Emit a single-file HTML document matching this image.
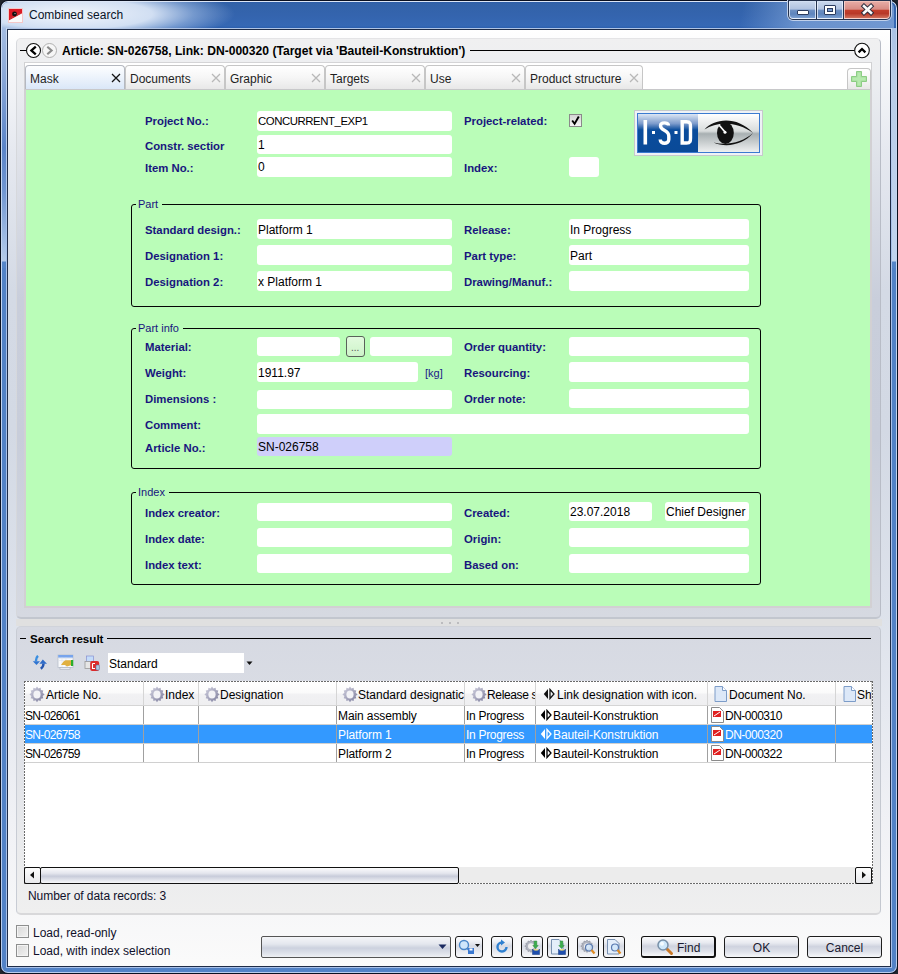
<!DOCTYPE html>
<html><head><meta charset="utf-8">
<style>
*{margin:0;padding:0;box-sizing:border-box}
html,body{width:898px;height:974px;overflow:hidden;background:#20242c}
body{position:relative;font-family:"Liberation Sans",sans-serif;font-size:12px;color:#000}
.a{position:absolute}
.t{position:absolute;white-space:nowrap;line-height:1}
.lbl{position:absolute;white-space:nowrap;line-height:1;font-weight:bold;font-size:11.35px;color:#18157e}
.fld{position:absolute;background:#fff;border-radius:3px}
.val{position:absolute;white-space:nowrap;line-height:1;font-size:12px;color:#000}
.grp{position:absolute;border:1px solid #050505;border-radius:3px}
.lgd{position:absolute;white-space:nowrap;line-height:1;font-size:11px;color:#18157e;background:#bafdb8;padding:0 4px 0 2px}
.tab{position:absolute;top:65px;height:24px;border:1px solid #c6c6c6;border-bottom:none;border-radius:4px 4px 0 0;
 background:linear-gradient(180deg,#ffffff 0%,#f6f6f6 50%,#e8e8e8 100%)}
.tab .tx{position:absolute;left:4px;top:6.5px;white-space:nowrap;line-height:1;font-size:12px;color:#1e1e1e}
.tab .x{position:absolute;top:7px;width:10px;height:10px}
.hdr{position:absolute;top:682px;height:24px;border-right:1px solid #d5d5d5;border-bottom:1px solid #d5d5d5;
 background:linear-gradient(180deg,#ffffff 0%,#fbfbfb 45%,#f1f1f3 55%,#efeff1 100%)}
.cell{position:absolute;white-space:nowrap;line-height:1;font-size:12px;color:#000}
.btn{position:absolute;top:936px;height:22px;border:1px solid #1e1e1e;border-radius:3px;
 background:linear-gradient(180deg,#fbfbfc 0%,#e8eaf0 30%,#cfd3df 48%,#dfe2ea 75%,#f6f7f9 100%)}
.btn .tx{position:absolute;top:5px;width:100%;text-align:center;white-space:nowrap;line-height:1;font-size:12px;color:#1a1a30}
.ib{position:absolute;top:936px;height:22px;width:22px;border:1.5px solid #1a1a1a;border-radius:3px;
 background:linear-gradient(180deg,#fdfdfe 0%,#eceef3 25%,#d6dae4 45%,#e6e8ee 70%,#f8f8fa 100%)}
</style></head><body>
<div class="a" style="left:0;top:0;width:898px;height:974px;border-radius:8px;background:#0a1020"></div>
<div class="a" style="left:1px;top:1px;width:896px;height:972px;border-radius:7px;background:linear-gradient(180deg,#dce6f6 0px,#c8d8f0 30px,#b8ccec 100%)"></div>
<div class="a" style="left:2px;top:2px;width:894px;height:970px;border-radius:6px;background:linear-gradient(180deg,#8eaad6 0px,#8aa8d8 30px,#7aa0d8 80px,#5a88c8 170px,#5282c6 260px,#5282c6 100%)"></div>
<div class="a" style="left:2px;top:28px;width:4px;height:240px;background:linear-gradient(180deg,#a4bce2 0px,#90acd9 40px,#5a84c8 120px,#6e94d0 160px,#a8c2e6 220px,#b4cae8 233px,#5585c8 234px)"></div>
<div class="a" style="left:892px;top:20px;width:4px;height:248px;background:linear-gradient(180deg,#a8c0e4 0px,#b8cce8 60px,#c0d4ee 241px,#5585c8 242px)"></div>
<div class="a" style="left:2px;top:2px;width:894px;height:26px;border-radius:6px 6px 0 0;background:linear-gradient(180deg,#2a5aa8 0,#3262a8 1px,#3464ae 50%,#3668b4 92%,#2a5eae 100%)"></div>
<div class="a" style="left:2px;top:2px;width:328px;height:26px;border-radius:6px 0 0 0;background:radial-gradient(ellipse 165px 30px at 68px 12px,rgba(250,252,255,.96) 0%,rgba(226,236,250,.9) 50%,rgba(170,196,232,.55) 75%,rgba(52,100,174,0) 100%)"></div>
<div class="a" style="left:600px;top:2px;width:294px;height:26px;border-radius:0 6px 0 0;background:linear-gradient(100deg,rgba(128,164,216,0) 0%,rgba(128,164,216,0) 48%,rgba(128,164,216,.7) 68%,rgba(124,160,214,.85) 100%)"></div>
<div class="a" style="left:6px;top:28px;width:886px;height:1px;background:#b0c4e4"></div>
<div class="a" style="left:6px;top:28px;width:1px;height:940px;background:linear-gradient(180deg,#c8d8f0,#a8c0e8 200px,#a8c0e8)"></div>
<div class="a" style="left:891px;top:28px;width:1px;height:940px;background:linear-gradient(180deg,#c8d8f0,#a8c0e8 200px,#a8c0e8)"></div>
<div class="a" style="left:6px;top:967px;width:886px;height:1px;background:#a8c0e8"></div>
<svg class="a" style="left:8px;top:8px" width="15" height="15" viewBox="0 0 15 15">
 <rect x="0" y="0" width="15" height="15" fill="#f4c8c8"/>
 <path d="M1 1 H14 V5.5 L1 12.5 Z" fill="#dc1a24"/>
 <path d="M1 12.5 L14 5.5 V14 H1 Z" fill="#fafafa"/>
 <path d="M2 10.5 L13 5" stroke="#c04040" stroke-width="0.8"/>
 <circle cx="6.5" cy="6" r="2.4" fill="#111"/>
 <circle cx="7" cy="5.6" r="0.7" fill="#bbb"/>
</svg>
<div class="t" style="left:29px;top:9px;font-size:12px;color:#0a1428">Combined search</div>
<div class="a" style="left:787px;top:0;width:105px;height:21px;border-radius:0 0 6px 6px;background:#c0d0ea"></div>
<div class="a" style="left:788px;top:0;width:103px;height:20px;border-radius:0 0 5px 5px;background:#24324e"></div>
<div class="a" style="left:789px;top:1px;width:27px;height:18px;border-radius:0 0 0 4px;border:1px solid rgba(240,246,255,.75);background:linear-gradient(180deg,#c8d6ec 0%,#b0c2e0 45%,#6e90c2 50%,#5e84bc 75%,#7c9fd2 100%)"></div>
<div class="a" style="left:817px;top:1px;width:26px;height:18px;border:1px solid rgba(240,246,255,.75);background:linear-gradient(180deg,#c8d6ec 0%,#b0c2e0 45%,#6e90c2 50%,#5e84bc 75%,#7c9fd2 100%)"></div>
<div class="a" style="left:844px;top:1px;width:46px;height:18px;border-radius:0 0 4px 0;border:1px solid rgba(255,230,225,.7);background:linear-gradient(180deg,#e6aaa4 0%,#d88c84 45%,#c23e2c 52%,#b83828 72%,#d0705c 100%)"></div>
<div class="a" style="left:797px;top:10px;width:12px;height:5px;background:#fff;border:1px solid #2c3c60;border-radius:1px"></div>
<div class="a" style="left:824px;top:5px;width:12px;height:10px;background:#fff;border:1px solid #2c3c60;border-radius:1px"></div>
<div class="a" style="left:827px;top:8px;width:6px;height:4px;background:#7a9cd0;border:1px solid #2c3c60"></div>
<svg class="a" style="left:860px;top:3px" width="15" height="13" viewBox="0 0 15 13"><path d="M4 3.2 L11 9.8 M11 3.2 L4 9.8" stroke="#2a2a3a" stroke-width="4.6" stroke-linecap="square"/><path d="M4 3.2 L11 9.8 M11 3.2 L4 9.8" stroke="#fafafa" stroke-width="2.6" stroke-linecap="square"/></svg>
<div class="a" style="left:7px;top:29px;width:884px;height:938px;border:1px solid #1e2c48"></div>
<div class="a" style="left:8px;top:30px;width:882px;height:936px;background:linear-gradient(180deg,#ffffff 0px,#f6f7f9 40px,#e6e9f0 120px,#d4dae5 260px,#d3d9e4 400px,#dde2eb 580px,#e6e9f0 680px,#f0f1f5 790px,#fafafa 930px,#fbfbfb 100%)"></div>
<div class="a" style="left:16px;top:38px;width:865px;height:581px;border-radius:5px;border:1px solid #d6d8dc;border-right-color:#b8bcc6;border-bottom:2px solid #c2c6ce;border-top-color:#e4e4e6;background:linear-gradient(180deg,#f0f0f1 0px,#eceef1 40px,#dfe2e9 120px,#c9cedb 260px,#c8cdda 400px,#d3d7e0 540px,#d6d9e1 100%)"></div>
<div class="a" style="left:20px;top:50px;width:7px;height:1px;background:#000"></div>
<svg class="a" style="left:25px;top:42px" width="34" height="17" viewBox="0 0 34 17">
 <circle cx="8.5" cy="8.5" r="7" fill="#fff" stroke="#111" stroke-width="1.1"/>
 <path d="M10.8 4.6 L6.4 8.5 L10.8 12.4" fill="none" stroke="#000" stroke-width="2.3"/>
 <circle cx="24.5" cy="8.5" r="7" fill="#f6f6f6" stroke="#b0b0b0" stroke-width="1"/>
 <path d="M22.3 4.8 L26.6 8.5 L22.3 12.2" fill="none" stroke="#8a8a8a" stroke-width="2.1"/>
</svg>
<div class="t" style="left:62px;top:45px;font-size:12.1px;font-weight:bold">Article: SN-026758, Link: DN-000320 (Target via 'Bauteil-Konstruktion')</div>
<div class="a" style="left:470px;top:50px;width:385px;height:1px;background:#000"></div>
<svg class="a" style="left:853px;top:42px" width="18" height="17" viewBox="0 0 18 17">
 <circle cx="9" cy="8.5" r="7.3" fill="#fff" stroke="#111" stroke-width="1.1"/>
 <path d="M5.6 10.4 L9 7 L12.4 10.4" fill="none" stroke="#000" stroke-width="2.2"/>
</svg>
<div class="a" style="left:24px;top:62px;width:848px;height:28px;background:#fff;border-top:1px solid #d4d4d6;border-left:1px solid #d0d0d2;border-right:1px solid #d0d0d2"></div>
<div class="tab" style="left:25px;width:100px;background:linear-gradient(180deg,#fdfeff 0%,#eef4fc 45%,#dae7f8 100%);border-color:#b4b8c0"><div class="tx">Mask</div><svg class="x" style="left:85px" viewBox="0 0 10 10"><path d="M1 1 L9 9 M9 1 L1 9" stroke="#141414" stroke-width="1.25"/></svg></div>
<div class="tab" style="left:125px;width:100px"><div class="tx">Documents</div><svg class="x" style="left:85px" viewBox="0 0 10 10"><path d="M1 1 L9 9 M9 1 L1 9" stroke="#b8b8b8" stroke-width="1.25"/></svg></div>
<div class="tab" style="left:225px;width:100px"><div class="tx">Graphic</div><svg class="x" style="left:85px" viewBox="0 0 10 10"><path d="M1 1 L9 9 M9 1 L1 9" stroke="#b8b8b8" stroke-width="1.25"/></svg></div>
<div class="tab" style="left:325px;width:100px"><div class="tx">Targets</div><svg class="x" style="left:85px" viewBox="0 0 10 10"><path d="M1 1 L9 9 M9 1 L1 9" stroke="#b8b8b8" stroke-width="1.25"/></svg></div>
<div class="tab" style="left:425px;width:100px"><div class="tx">Use</div><svg class="x" style="left:85px" viewBox="0 0 10 10"><path d="M1 1 L9 9 M9 1 L1 9" stroke="#b8b8b8" stroke-width="1.25"/></svg></div>
<div class="tab" style="left:525px;width:118px"><div class="tx">Product structure</div><svg class="x" style="left:103px" viewBox="0 0 10 10"><path d="M1 1 L9 9 M9 1 L1 9" stroke="#b8b8b8" stroke-width="1.25"/></svg></div>
<div class="tab" style="left:847px;top:68px;width:24px;height:21px"></div>
<svg class="a" style="left:851px;top:71px" width="16" height="16" viewBox="0 0 16 16">
 <path d="M5.5 0.5 H10.5 V5.5 H15.5 V10.5 H10.5 V15.5 H5.5 V10.5 H0.5 V5.5 H5.5 Z" fill="#a4dc9c" stroke="#8ccc84" stroke-width="1"/>
 <path d="M6.5 1.5 H9.5 V6.5 H14.5 V9.5 H9.5 V14.5 H6.5 V9.5 H1.5 V6.5 H6.5 Z" fill="#b6eaae"/>
</svg>
<div class="a" style="left:24px;top:89px;width:848px;height:519px;background:#bafdb8;border:2px solid #d2d0d3;border-top:1px solid #c8c8ca"></div>
<div class="lbl" style="left:145px;top:115.99px">Project No.:</div>
<div class="fld" style="left:257px;top:111px;width:195px;height:20px"></div>
<div class="val" style="left:258px;top:115.84px;font-size:11.4px;letter-spacing:-0.45px">CONCURRENT_EXP1</div>
<div class="lbl" style="left:145px;top:140.99px">Constr. sectior</div>
<div class="fld" style="left:257px;top:135px;width:195px;height:19px"></div>
<div class="val" style="left:258px;top:138.84px">1</div>
<div class="lbl" style="left:145px;top:162.99px">Item No.:</div>
<div class="fld" style="left:257px;top:157px;width:195px;height:20px"></div>
<div class="val" style="left:258px;top:160.84px">0</div>
<div class="lbl" style="left:464px;top:115.99px">Project-related:</div>
<div class="a" style="left:569px;top:114px;width:13px;height:13px;border:1px solid #8a8a8a;background:linear-gradient(180deg,#d4d4d4,#f4f4f4)"></div>
<svg class="a" style="left:570px;top:115px" width="11" height="11" viewBox="0 0 11 11"><path d="M2.2 5.5 L4.6 8.8 L8.8 1.5" fill="none" stroke="#000" stroke-width="1.9"/></svg>
<div class="lbl" style="left:464px;top:162.99px">Index:</div>
<div class="fld" style="left:569px;top:157px;width:30px;height:20px"></div>
<div class="grp" style="left:131px;top:204px;width:630px;height:103px"></div>
<div class="lgd" style="left:136px;top:198.7px">Part</div>
<div class="lbl" style="left:145px;top:224.99px">Standard design.:</div>
<div class="fld" style="left:257px;top:219px;width:195px;height:20px"></div>
<div class="val" style="left:258px;top:223.84px">Platform 1</div>
<div class="lbl" style="left:145px;top:250.99px">Designation 1:</div>
<div class="fld" style="left:257px;top:245px;width:195px;height:20px"></div>
<div class="lbl" style="left:145px;top:276.99px">Designation 2:</div>
<div class="fld" style="left:257px;top:271px;width:195px;height:20px"></div>
<div class="val" style="left:258px;top:275.84px">x Platform 1</div>
<div class="lbl" style="left:464px;top:224.99px">Release:</div>
<div class="fld" style="left:569px;top:219px;width:180px;height:20px"></div>
<div class="val" style="left:570px;top:223.84px">In Progress</div>
<div class="lbl" style="left:464px;top:250.99px">Part type:</div>
<div class="fld" style="left:569px;top:245px;width:180px;height:20px"></div>
<div class="val" style="left:570px;top:249.84px">Part</div>
<div class="lbl" style="left:464px;top:276.99px">Drawing/Manuf.:</div>
<div class="fld" style="left:569px;top:271px;width:180px;height:20px"></div>
<div class="grp" style="left:131px;top:328px;width:630px;height:141px"></div>
<div class="lgd" style="left:136px;top:322.7px">Part info</div>
<div class="lbl" style="left:145px;top:341.99px">Material:</div>
<div class="fld" style="left:257px;top:337px;width:83px;height:19px"></div>
<div class="fld" style="left:370px;top:337px;width:82px;height:19px"></div>
<div class="a" style="left:346px;top:336px;width:19px;height:21px;border:1px solid #5a625a;border-radius:3px;background:linear-gradient(180deg,#e2fade,#cdf4c9)"></div>
<div class="t" style="left:351px;top:343px;font-size:10px;color:#555">...</div>
<div class="lbl" style="left:145px;top:367.99px">Weight:</div>
<div class="fld" style="left:257px;top:362px;width:161px;height:20px"></div>
<div class="val" style="left:258px;top:366.84px">1911.97</div>
<div class="t" style="left:425px;top:368px;font-size:11px;color:#1c1a88">[kg]</div>
<div class="lbl" style="left:145px;top:393.99px">Dimensions :</div>
<div class="fld" style="left:257px;top:390px;width:195px;height:19px"></div>
<div class="lbl" style="left:145px;top:419.99px">Comment:</div>
<div class="fld" style="left:257px;top:414px;width:492px;height:20px"></div>
<div class="lbl" style="left:145px;top:442.99px">Article No.:</div>
<div class="fld" style="left:257px;top:437px;width:195px;height:19px;background:#cfcffa"></div>
<div class="val" style="left:258px;top:440.84px">SN-026758</div>
<div class="lbl" style="left:464px;top:341.99px">Order quantity:</div>
<div class="fld" style="left:569px;top:337px;width:180px;height:19px"></div>
<div class="lbl" style="left:464px;top:367.99px">Resourcing:</div>
<div class="fld" style="left:569px;top:362px;width:180px;height:20px"></div>
<div class="lbl" style="left:464px;top:393.99px">Order note:</div>
<div class="fld" style="left:569px;top:389px;width:180px;height:19px"></div>
<div class="grp" style="left:131px;top:492px;width:630px;height:93px"></div>
<div class="lgd" style="left:136px;top:486.7px">Index</div>
<div class="lbl" style="left:145px;top:507.99px">Index creator:</div>
<div class="fld" style="left:257px;top:503px;width:195px;height:18px"></div>
<div class="lbl" style="left:145px;top:533.99px">Index date:</div>
<div class="fld" style="left:257px;top:528px;width:195px;height:19px"></div>
<div class="lbl" style="left:145px;top:559.99px">Index text:</div>
<div class="fld" style="left:257px;top:554px;width:195px;height:19px"></div>
<div class="lbl" style="left:464px;top:507.99px">Created:</div>
<div class="fld" style="left:569px;top:502px;width:83px;height:19px"></div>
<div class="val" style="left:570px;top:505.84px">23.07.2018</div>
<div class="fld" style="left:665px;top:502px;width:84px;height:19px"></div>
<div class="val" style="left:666px;top:505.84px">Chief Designer</div>
<div class="lbl" style="left:464px;top:533.99px">Origin:</div>
<div class="fld" style="left:569px;top:528px;width:180px;height:19px"></div>
<div class="lbl" style="left:464px;top:559.99px">Based on:</div>
<div class="fld" style="left:569px;top:554px;width:180px;height:19px"></div>
<svg class="a" style="left:634px;top:110px" width="129" height="46" viewBox="0 0 129 46">
 <defs>
  <linearGradient id="lb" x1="0" y1="0" x2="0" y2="1"><stop offset="0" stop-color="#dce6f4"/><stop offset="0.25" stop-color="#7e9ccc"/><stop offset="0.42" stop-color="#0a4c9c"/><stop offset="1" stop-color="#0a4a98"/></linearGradient>
  <linearGradient id="rg" x1="0" y1="0" x2="0" y2="1"><stop offset="0" stop-color="#ffffff"/><stop offset="0.45" stop-color="#d8dcdc"/><stop offset="0.52" stop-color="#a8b0b2"/><stop offset="1" stop-color="#eef0f0"/></linearGradient>
 </defs>
 <rect x="0.5" y="0.5" width="128" height="45" fill="#eef2f6" stroke="#c6cacc"/>
 <rect x="3" y="3" width="123" height="40" fill="#3a7ad0"/>
 <rect x="4" y="4" width="60" height="38" fill="url(#lb)"/>
 <rect x="64" y="4" width="61" height="38" fill="url(#rg)"/>
 <rect x="9.5" y="10" width="3.6" height="24.5" fill="#fff"/>
 <rect x="18" y="21" width="3" height="3" fill="#fff"/>
 <path d="M34.5 15.5 C34.5 12 26.5 12 26.5 15.8 C26.5 21 34.8 19.5 34.8 26 V29.5 C34.8 34.5 26.2 34.5 26.2 29.5" fill="none" stroke="#fff" stroke-width="3.4"/>
 <rect x="40.5" y="21" width="3" height="3" fill="#fff"/>
 <path d="M48.2 11.8 H52.5 C56.5 11.8 56.5 14 56.5 17 V28 C56.5 31 56.5 33 52.5 33 H48.2 Z" fill="none" stroke="#fff" stroke-width="3.4"/>
 <path d="M70.5 19.5 C80 8.5 103 5.5 119 23 C104 11.5 83 11 70.5 19.5 Z" fill="#111"/>
 <path d="M79.5 32.5 C93 38.5 110 34 119 23 C109 32 93 36 79.5 32.5 Z" fill="#111"/>
 <ellipse cx="91.4" cy="23" rx="8.4" ry="11" fill="#111"/>
 <path d="M85.2 15.2 L90.8 21.8" stroke="#fff" stroke-width="1.7"/>
 <circle cx="91" cy="22.2" r="1.5" fill="#fff"/>
</svg>
<div class="a" style="left:16px;top:619px;width:866px;height:7px;background:#e0e0e0"></div>
<div class="a" style="left:441px;top:621.5px;width:2.2px;height:2.2px;border-radius:1px;background:#b0b0b4"></div>
<div class="a" style="left:449px;top:621.5px;width:2.2px;height:2.2px;border-radius:1px;background:#b0b0b4"></div>
<div class="a" style="left:457px;top:621.5px;width:2.2px;height:2.2px;border-radius:1px;background:#b0b0b4"></div>
<div class="a" style="left:16px;top:626px;width:865px;height:289px;border-radius:5px;border:1px solid #d0d3da;border-left-color:#c8ccd4;border-right-color:#c4c8d0;border-bottom:2px solid #d8d8da;background:linear-gradient(180deg,#d6d9e2 0px,#d9dce4 60px,#e2e4e9 150px,#eaebed 220px,#efefef 100%)"></div>
<div class="a" style="left:20px;top:638px;width:6px;height:1px;background:#000"></div>
<div class="t" style="left:30px;top:632.8px;font-size:11.6px;font-weight:bold">Search result</div>
<div class="a" style="left:107px;top:638px;width:764px;height:1px;background:#000"></div>
<svg class="a" style="left:32px;top:655px" width="16" height="16" viewBox="0 0 16 16">
 <path d="M6 0.8 C4.6 2 3.8 3.6 4 6.4" fill="none" stroke="#3a8ee0" stroke-width="2.4"/>
 <path d="M0.8 6.2 H8 L4.5 10 Z" fill="#2f74d0"/>
 <path d="M11.5 8.4 C11.6 10.6 10.6 12.4 8.8 13.8" fill="none" stroke="#2456b0" stroke-width="2.4"/>
 <path d="M7.4 8.8 H15 L10.8 4.6 Z" fill="#2f6cc8"/>
</svg>
<svg class="a" style="left:56px;top:652px" width="20" height="20" viewBox="0 0 20 20">
 <rect x="2" y="3" width="15" height="12.5" fill="#f8f9fb" stroke="#b8c0cc" stroke-width="0.8"/>
 <rect x="2.2" y="3" width="14.8" height="2.6" fill="#78a4ec"/>
 <path d="M3 6.5 H16 M3 8.5 H16 M6 5.6 V15 M10 5.6 V15" stroke="#dde3ec" stroke-width="0.6"/>
 <rect x="4" y="15.5" width="10" height="2" fill="#e8ecf2" stroke="#a8b0bc" stroke-width="0.6"/>
 <path d="M5 13 L7.5 9.5 L9.5 8.2 H15 V13.2 L11 14.6 L9 13 Z" fill="#e0b040"/>
 <rect x="15" y="8" width="2.2" height="6" fill="#2cae2c"/>
</svg>
<svg class="a" style="left:82px;top:652px" width="20" height="20" viewBox="0 0 20 20">
 <rect x="4.5" y="4" width="7" height="5.5" fill="#c4dcfa" stroke="#8890d0" stroke-width="0.7"/>
 <rect x="3" y="9.5" width="8" height="7" fill="#e6e6e6" stroke="#9a9a9a" stroke-width="0.8"/>
 <rect x="8.2" y="9" width="9" height="10" rx="2" fill="#dc2a2a"/>
 <path d="M10.5 11.5 V16.5 H13 M10.5 11.5 H13" fill="none" stroke="#fff" stroke-width="1.1"/>
 <rect x="14" y="13" width="3.4" height="5" rx="0.8" fill="#b4c8e0" stroke="#5a7aa8" stroke-width="0.6"/>
</svg>
<div class="a" style="left:108px;top:653px;width:136px;height:20px;background:#fff"></div>
<div class="t" style="left:109px;top:657.8px;font-size:12px">Standard</div>
<svg class="a" style="left:246px;top:661px" width="8" height="5" viewBox="0 0 8 5"><path d="M0.5 0.5 H6.5 L3.5 4 Z" fill="#111"/></svg>
<div class="a" style="left:24px;top:681px;width:849px;height:203px;background:#fff"></div>
<div class="a" style="left:25px;top:724px;width:847px;height:19px;background:#3399ff"></div>
<div class="a" style="left:143px;top:705px;width:1px;height:58px;background:#a0a0a0"></div>
<div class="a" style="left:198px;top:705px;width:1px;height:58px;background:#a0a0a0"></div>
<div class="a" style="left:336px;top:705px;width:1px;height:58px;background:#a0a0a0"></div>
<div class="a" style="left:464px;top:705px;width:1px;height:58px;background:#a0a0a0"></div>
<div class="a" style="left:535px;top:705px;width:1px;height:58px;background:#a0a0a0"></div>
<div class="a" style="left:707px;top:705px;width:1px;height:58px;background:#a0a0a0"></div>
<div class="a" style="left:835px;top:705px;width:1px;height:58px;background:#a0a0a0"></div>
<div class="a" style="left:25px;top:724px;width:847px;height:1px;background:#d0d0d0"></div>
<div class="a" style="left:25px;top:743px;width:847px;height:1px;background:#d0d0d0"></div>
<div class="a" style="left:25px;top:762px;width:847px;height:1px;background:#d0d0d0"></div>
<div class="hdr" style="left:25px;width:119px;overflow:hidden"><svg class="a" style="left:4px;top:4px" width="16" height="17" viewBox="0 0 16 17"><defs><linearGradient id="gg" x1="0" y1="0" x2="1" y2="1"><stop offset="0" stop-color="#d4d4e2"/><stop offset="1" stop-color="#7a7a9a"/></linearGradient></defs><path d="M8 0.6 L9.4 2.5 L11.6 1.7 L11.9 4.1 L14.3 4.5 L13.6 6.8 L15.6 8.4 L13.6 10 L14.3 12.3 L11.9 12.7 L11.6 15.1 L9.4 14.3 L8 16.2 L6.6 14.3 L4.4 15.1 L4.1 12.7 L1.7 12.3 L2.4 10 L0.4 8.4 L2.4 6.8 L1.7 4.5 L4.1 4.1 L4.4 1.7 L6.6 2.5 Z" fill="url(#gg)"/><ellipse cx="8" cy="8.4" rx="3.6" ry="4" fill="#f2f2f6"/></svg><div class="t" style="left:21px;top:6.8px;font-size:12px;letter-spacing:0">Article No.</div></div>
<div class="hdr" style="left:144px;width:55px;overflow:hidden"><svg class="a" style="left:5px;top:4px" width="16" height="17" viewBox="0 0 16 17"><defs><linearGradient id="gg" x1="0" y1="0" x2="1" y2="1"><stop offset="0" stop-color="#d4d4e2"/><stop offset="1" stop-color="#7a7a9a"/></linearGradient></defs><path d="M8 0.6 L9.4 2.5 L11.6 1.7 L11.9 4.1 L14.3 4.5 L13.6 6.8 L15.6 8.4 L13.6 10 L14.3 12.3 L11.9 12.7 L11.6 15.1 L9.4 14.3 L8 16.2 L6.6 14.3 L4.4 15.1 L4.1 12.7 L1.7 12.3 L2.4 10 L0.4 8.4 L2.4 6.8 L1.7 4.5 L4.1 4.1 L4.4 1.7 L6.6 2.5 Z" fill="url(#gg)"/><ellipse cx="8" cy="8.4" rx="3.6" ry="4" fill="#f2f2f6"/></svg><div class="t" style="left:21px;top:6.8px;font-size:12px;letter-spacing:0">Index</div></div>
<div class="hdr" style="left:199px;width:138px;overflow:hidden"><svg class="a" style="left:5px;top:4px" width="16" height="17" viewBox="0 0 16 17"><defs><linearGradient id="gg" x1="0" y1="0" x2="1" y2="1"><stop offset="0" stop-color="#d4d4e2"/><stop offset="1" stop-color="#7a7a9a"/></linearGradient></defs><path d="M8 0.6 L9.4 2.5 L11.6 1.7 L11.9 4.1 L14.3 4.5 L13.6 6.8 L15.6 8.4 L13.6 10 L14.3 12.3 L11.9 12.7 L11.6 15.1 L9.4 14.3 L8 16.2 L6.6 14.3 L4.4 15.1 L4.1 12.7 L1.7 12.3 L2.4 10 L0.4 8.4 L2.4 6.8 L1.7 4.5 L4.1 4.1 L4.4 1.7 L6.6 2.5 Z" fill="url(#gg)"/><ellipse cx="8" cy="8.4" rx="3.6" ry="4" fill="#f2f2f6"/></svg><div class="t" style="left:21px;top:6.8px;font-size:12px;letter-spacing:0">Designation</div></div>
<div class="hdr" style="left:337px;width:128px;overflow:hidden"><svg class="a" style="left:5px;top:4px" width="16" height="17" viewBox="0 0 16 17"><defs><linearGradient id="gg" x1="0" y1="0" x2="1" y2="1"><stop offset="0" stop-color="#d4d4e2"/><stop offset="1" stop-color="#7a7a9a"/></linearGradient></defs><path d="M8 0.6 L9.4 2.5 L11.6 1.7 L11.9 4.1 L14.3 4.5 L13.6 6.8 L15.6 8.4 L13.6 10 L14.3 12.3 L11.9 12.7 L11.6 15.1 L9.4 14.3 L8 16.2 L6.6 14.3 L4.4 15.1 L4.1 12.7 L1.7 12.3 L2.4 10 L0.4 8.4 L2.4 6.8 L1.7 4.5 L4.1 4.1 L4.4 1.7 L6.6 2.5 Z" fill="url(#gg)"/><ellipse cx="8" cy="8.4" rx="3.6" ry="4" fill="#f2f2f6"/></svg><div class="t" style="left:21px;top:6.8px;font-size:12px;letter-spacing:0">Standard designatic</div></div>
<div class="hdr" style="left:465px;width:71px;overflow:hidden"><svg class="a" style="left:6px;top:4px" width="16" height="17" viewBox="0 0 16 17"><defs><linearGradient id="gg" x1="0" y1="0" x2="1" y2="1"><stop offset="0" stop-color="#d4d4e2"/><stop offset="1" stop-color="#7a7a9a"/></linearGradient></defs><path d="M8 0.6 L9.4 2.5 L11.6 1.7 L11.9 4.1 L14.3 4.5 L13.6 6.8 L15.6 8.4 L13.6 10 L14.3 12.3 L11.9 12.7 L11.6 15.1 L9.4 14.3 L8 16.2 L6.6 14.3 L4.4 15.1 L4.1 12.7 L1.7 12.3 L2.4 10 L0.4 8.4 L2.4 6.8 L1.7 4.5 L4.1 4.1 L4.4 1.7 L6.6 2.5 Z" fill="url(#gg)"/><ellipse cx="8" cy="8.4" rx="3.6" ry="4" fill="#f2f2f6"/></svg><div class="t" style="left:22px;top:6.8px;font-size:12px;letter-spacing:-0.35px">Release s</div></div>
<div class="hdr" style="left:536px;width:172px;overflow:hidden"><svg class="a" style="left:7px;top:6px" width="12" height="12" viewBox="0 0 12 12"><path d="M5 1 L0.8 6 L5 11 Z" fill="#111"/><path d="M7 1.5 L11 6 L7 10.5 Z" fill="none" stroke="#111" stroke-width="1.3"/></svg><div class="t" style="left:21px;top:6.8px;font-size:12px;letter-spacing:0">Link designation with icon.</div></div>
<div class="hdr" style="left:708px;width:128px;overflow:hidden"><svg class="a" style="left:6px;top:4px" width="13" height="16" viewBox="0 0 13 16"><path d="M1 0.5 H8.5 L12.5 4.5 V15.5 H1 Z" fill="#dce8f8" stroke="#7c9cc8"/><path d="M8.5 0.5 V4.5 H12.5" fill="#fff" stroke="#7c9cc8"/></svg><div class="t" style="left:21px;top:6.8px;font-size:12px;letter-spacing:0">Document No.</div></div>
<div class="hdr" style="left:836px;width:36px;overflow:hidden"><svg class="a" style="left:7px;top:4px" width="13" height="16" viewBox="0 0 13 16"><path d="M1 0.5 H8.5 L12.5 4.5 V15.5 H1 Z" fill="#dce8f8" stroke="#7c9cc8"/><path d="M8.5 0.5 V4.5 H12.5" fill="#fff" stroke="#7c9cc8"/></svg><div class="t" style="left:21px;top:6.8px;font-size:12px;letter-spacing:0">Sh</div></div>
<div class="cell" style="left:25px;top:710.0px;color:#000;letter-spacing:-0.65px">SN-026061</div>
<div class="cell" style="left:338px;top:710.0px;color:#000;letter-spacing:-0.1px">Main assembly</div>
<div class="cell" style="left:466px;top:710.0px;color:#000;letter-spacing:-0.3px">In Progress</div>
<svg class="a" style="left:540px;top:709px" width="12" height="12" viewBox="0 0 12 12"><path d="M5 1 L0.8 6 L5 11 Z" fill="#000"/><path d="M7 1.5 L11 6 L7 10.5 Z" fill="none" stroke="#000" stroke-width="1.3"/></svg>
<div class="cell" style="left:553px;top:710.0px;color:#000;letter-spacing:-0.1px">Bauteil-Konstruktion</div>
<svg class="a" style="left:711px;top:707px" width="13" height="16" viewBox="0 0 13 16"><path d="M0.5 0.5 H8.5 L12.5 4.5 V15.5 H0.5 Z" fill="#fff" stroke="#8a8a8a"/><rect x="2" y="4" width="8" height="6" fill="#e02020"/><path d="M3 9 L9 5" stroke="#fff" stroke-width="1"/></svg>
<div class="cell" style="left:725px;top:710.0px;color:#000;letter-spacing:-0.5px">DN-000310</div>
<div class="cell" style="left:25px;top:729.0px;color:#fff;letter-spacing:-0.65px">SN-026758</div>
<div class="cell" style="left:338px;top:729.0px;color:#fff;letter-spacing:-0.1px">Platform 1</div>
<div class="cell" style="left:466px;top:729.0px;color:#fff;letter-spacing:-0.3px">In Progress</div>
<svg class="a" style="left:540px;top:728px" width="12" height="12" viewBox="0 0 12 12"><path d="M5 1 L0.8 6 L5 11 Z" fill="#fff"/><path d="M7 1.5 L11 6 L7 10.5 Z" fill="none" stroke="#fff" stroke-width="1.3"/></svg>
<div class="cell" style="left:553px;top:729.0px;color:#fff;letter-spacing:-0.1px">Bauteil-Konstruktion</div>
<svg class="a" style="left:711px;top:726px" width="13" height="16" viewBox="0 0 13 16"><path d="M0.5 0.5 H8.5 L12.5 4.5 V15.5 H0.5 Z" fill="#fff" stroke="#8a8a8a"/><rect x="2" y="4" width="8" height="6" fill="#e02020"/><path d="M3 9 L9 5" stroke="#fff" stroke-width="1"/></svg>
<div class="cell" style="left:725px;top:729.0px;color:#fff;letter-spacing:-0.5px">DN-000320</div>
<div class="cell" style="left:25px;top:748.0px;color:#000;letter-spacing:-0.65px">SN-026759</div>
<div class="cell" style="left:338px;top:748.0px;color:#000;letter-spacing:-0.1px">Platform 2</div>
<div class="cell" style="left:466px;top:748.0px;color:#000;letter-spacing:-0.3px">In Progress</div>
<svg class="a" style="left:540px;top:747px" width="12" height="12" viewBox="0 0 12 12"><path d="M5 1 L0.8 6 L5 11 Z" fill="#000"/><path d="M7 1.5 L11 6 L7 10.5 Z" fill="none" stroke="#000" stroke-width="1.3"/></svg>
<div class="cell" style="left:553px;top:748.0px;color:#000;letter-spacing:-0.1px">Bauteil-Konstruktion</div>
<svg class="a" style="left:711px;top:745px" width="13" height="16" viewBox="0 0 13 16"><path d="M0.5 0.5 H8.5 L12.5 4.5 V15.5 H0.5 Z" fill="#fff" stroke="#8a8a8a"/><rect x="2" y="4" width="8" height="6" fill="#e02020"/><path d="M3 9 L9 5" stroke="#fff" stroke-width="1"/></svg>
<div class="cell" style="left:725px;top:748.0px;color:#000;letter-spacing:-0.5px">DN-000322</div>
<div class="a" style="left:25px;top:867px;width:847px;height:16px;background:#ececec"></div>
<div class="a" style="left:24px;top:681px;width:849px;height:1px;background:repeating-linear-gradient(90deg,#6a6a6a 0,#6a6a6a 2px,transparent 2px,transparent 3px)"></div>
<div class="a" style="left:24px;top:883px;width:849px;height:1px;background:repeating-linear-gradient(90deg,#6a6a6a 0,#6a6a6a 2px,transparent 2px,transparent 3px)"></div>
<div class="a" style="left:24px;top:681px;width:1px;height:203px;background:repeating-linear-gradient(180deg,#6a6a6a 0,#6a6a6a 2px,transparent 2px,transparent 3px)"></div>
<div class="a" style="left:872px;top:681px;width:1px;height:203px;background:repeating-linear-gradient(180deg,#6a6a6a 0,#6a6a6a 2px,transparent 2px,transparent 3px)"></div>
<div class="a" style="left:24px;top:867px;width:17px;height:17px;border:1px solid #111;border-radius:2px;background:linear-gradient(180deg,#fdfdfd,#e8e9ec)"></div>
<svg class="a" style="left:29px;top:871px" width="6" height="8" viewBox="0 0 6 8"><path d="M5 0.5 V7.5 L1 4 Z" fill="#111"/></svg>
<div class="a" style="left:40px;top:867px;width:419px;height:17px;border:1px solid #111;border-radius:2px;background:linear-gradient(180deg,#fbfbfc 0%,#e4e6ee 35%,#c8ccda 55%,#e2e4ec 80%,#f6f7f9 100%)"></div>
<div class="a" style="left:855px;top:867px;width:17px;height:17px;border:1px solid #111;border-radius:2px;background:linear-gradient(180deg,#fdfdfd,#e8e9ec)"></div>
<svg class="a" style="left:861px;top:871px" width="6" height="8" viewBox="0 0 6 8"><path d="M1 0.5 V7.5 L5 4 Z" fill="#111"/></svg>
<div class="t" style="left:28px;top:889.5px;font-size:12px;color:#10102a;letter-spacing:-0.05px">Number of data records: 3</div>
<div class="a" style="left:16px;top:925px;width:13px;height:13px;border:1px solid #8e8f8f;background:#f4f4f4"></div>
<div class="a" style="left:18px;top:927px;width:9px;height:9px;background:linear-gradient(135deg,#dadada,#f0f0f0)"></div>
<div class="a" style="left:16px;top:944px;width:13px;height:13px;border:1px solid #8e8f8f;background:#f4f4f4"></div>
<div class="a" style="left:18px;top:946px;width:9px;height:9px;background:linear-gradient(135deg,#dadada,#f0f0f0)"></div>
<div class="t" style="left:33px;top:927px;font-size:12px;color:#10102a">Load, read-only</div>
<div class="t" style="left:33px;top:945px;font-size:12px;color:#10102a">Load, with index selection</div>
<div class="a" style="left:261px;top:936px;width:190px;height:22px;border:1px solid #555;border-radius:2px;background:linear-gradient(180deg,#f4f5f8 0%,#e4e7ee 35%,#ccd1de 55%,#dde1ea 80%,#eef0f4 100%)"></div>
<svg class="a" style="left:438px;top:944px" width="9" height="6" viewBox="0 0 9 6"><path d="M0.5 0.5 H8.5 L4.5 5 Z" fill="#1a2a60"/></svg>
<div class="ib" style="left:455px;width:28px"></div>
<div class="ib" style="left:491px;width:22px"></div>
<div class="ib" style="left:521px;width:22px"></div>
<div class="ib" style="left:547px;width:22px"></div>
<div class="ib" style="left:577px;width:22px"></div>
<div class="ib" style="left:603px;width:22px"></div>
<svg class="a" style="left:458px;top:939px" width="22" height="16" viewBox="0 0 22 16"><circle cx="6" cy="6" r="4.5" fill="#cfe6fb" stroke="#4a86c8" stroke-width="1.4"/><path d="M9 9 L12 12" stroke="#4a86c8" stroke-width="2"/><rect x="10" y="9" width="6" height="6" fill="#3a78d0"/><rect x="11.5" y="9.5" width="3" height="2" fill="#fff"/><path d="M17 5 H22 L19.5 8 Z" fill="#111"/></svg>
<svg class="a" style="left:494px;top:939px" width="16" height="16" viewBox="0 0 16 16"><path d="M12.5 8 A4.5 4.5 0 1 1 8 3.5" fill="none" stroke="#2f80d0" stroke-width="2.4"/><path d="M7 0.5 L11 3.5 L7 6.5 Z" fill="#2f80d0"/></svg>
<svg class="a" style="left:524px;top:939px" width="16" height="16" viewBox="0 0 16 16"><path d="M7 1 L8.2 2.6 L10 2 L10.3 3.9 L12.2 4.3 L11.6 6.1 L13.2 7.2 L11.6 8.4 L12.2 10.2 L10.3 10.6 L10 12.5 L8.2 11.9 L7 13.5 L5.8 11.9 L4 12.5 L3.7 10.6 L1.8 10.2 L2.4 8.4 L0.8 7.2 L2.4 6.1 L1.8 4.3 L3.7 3.9 L4 2 L5.8 2.6 Z" fill="#b0b4c0" stroke="#80848f" stroke-width="0.5"/><circle cx="7" cy="7.2" r="3" fill="#eee"/><path d="M10.2 2 H12.8 V6.5 H14.2 L11.5 9.5 L8.8 6.5 H10.2 Z" fill="#3cae4c" stroke="#2a8a3a" stroke-width="0.5"/><path d="M8.5 10 L10 11.5 H14 L15.5 10 V15.5 H8.5 Z" fill="#1f4fae" stroke="#163a80" stroke-width="0.5"/><path d="M9.5 10.2 H14.5 L13.5 11.4 H10.5 Z" fill="#f4e070"/></svg>
<svg class="a" style="left:550px;top:939px" width="16" height="16" viewBox="0 0 16 16"><path d="M1.5 0.5 H9 L13 4.5 V15 H1.5 Z" fill="#e4eefa" stroke="#7890b0"/><path d="M10.2 2 H12.8 V6.5 H14.2 L11.5 9.5 L8.8 6.5 H10.2 Z" fill="#3cae4c" stroke="#2a8a3a" stroke-width="0.5"/><path d="M8.5 10 L10 11.5 H14 L15.5 10 V15.5 H8.5 Z" fill="#1f4fae" stroke="#163a80" stroke-width="0.5"/><path d="M9.5 10.2 H14.5 L13.5 11.4 H10.5 Z" fill="#f4e070"/></svg>
<svg class="a" style="left:580px;top:939px" width="16" height="16" viewBox="0 0 16 16"><path d="M7 1 L8.2 2.6 L10 2 L10.3 3.9 L12.2 4.3 L11.6 6.1 L13.2 7.2 L11.6 8.4 L12.2 10.2 L10.3 10.6 L10 12.5 L8.2 11.9 L7 13.5 L5.8 11.9 L4 12.5 L3.7 10.6 L1.8 10.2 L2.4 8.4 L0.8 7.2 L2.4 6.1 L1.8 4.3 L3.7 3.9 L4 2 L5.8 2.6 Z" fill="#b0b4c0" stroke="#80848f" stroke-width="0.5"/><circle cx="7" cy="7.2" r="3" fill="#eee"/><circle cx="9" cy="8.5" r="3.5" fill="#d0e6fa" fill-opacity="0.8" stroke="#5a7ab0" stroke-width="1.2"/><path d="M11.5 11 L14.5 14.5" stroke="#e08a20" stroke-width="2.2"/></svg>
<svg class="a" style="left:606px;top:939px" width="16" height="16" viewBox="0 0 16 16"><path d="M1.5 0.5 H9 L13 4.5 V15 H1.5 Z" fill="#e4eefa" stroke="#7890b0"/><circle cx="9" cy="8.5" r="3.5" fill="#d0e6fa" fill-opacity="0.8" stroke="#5a7ab0" stroke-width="1.2"/><path d="M11.5 11 L14.5 14.5" stroke="#e08a20" stroke-width="2.2"/></svg>
<div class="btn" style="left:641px;width:75px;border:1.5px solid #111;border-right-width:2px;border-bottom-width:2px"></div>
<svg class="a" style="left:656px;top:938px" width="18" height="18" viewBox="0 0 18 18"><path d="M10.5 10.5 L15.5 15.5" stroke="#c87828" stroke-width="3" stroke-linecap="round"/><circle cx="7" cy="7" r="5" fill="#cfe8fa" stroke="#7890a8" stroke-width="1.5"/><circle cx="6" cy="5.8" r="2" fill="#f4fbff"/></svg>
<div class="t" style="left:677px;top:941.8px;font-size:12px;color:#1a1a30">Find</div>
<div class="btn" style="left:724px;width:75px"><div class="tx">OK</div></div>
<div class="btn" style="left:807px;width:75px"><div class="tx">Cancel</div></div>
</body></html>
